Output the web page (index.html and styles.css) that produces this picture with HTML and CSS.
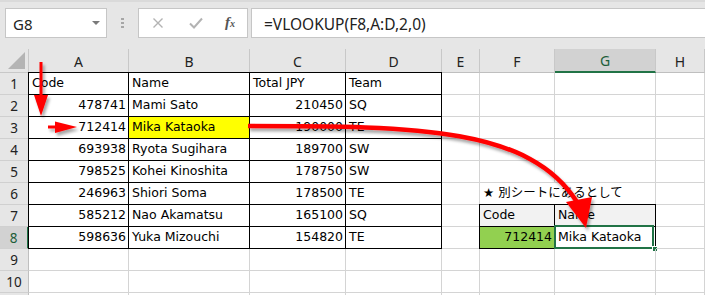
FILE: index.html
```html
<!DOCTYPE html>
<html lang="ja">
<head>
  <meta charset="UTF-8"/>
  <title>VLOOKUP sample</title>
  <link rel="stylesheet" href="styles.css">
</head>
<body>
  <!-- Formula bar -->
  <div class="toolbar">
    <div class="namebox"><span>G8</span><i class="drop"></i></div>
    <div class="dots"><i></i><i></i><i></i></div>
    <div class="fnbox">
      <svg class="ico" width="12" height="12" viewBox="0 0 12 12"><path d="M1.5 1.5 L10.5 10.5 M10.5 1.5 L1.5 10.5" stroke="#b3b3b3" stroke-width="1.4" fill="none"/></svg>
      <svg class="ico" width="14" height="12" viewBox="0 0 14 12"><path d="M1 6.5 L5 10.5 L13 1.5" stroke="#b3b3b3" stroke-width="2" fill="none"/></svg>
      <span class="fx">f<small>x</small></span>
    </div>
    <div class="formula">=VLOOKUP(F8,A:D,2,0)</div>
  </div>

  <!-- Sheet grid -->
  <div class="sheet">
    <div class="corner"><i></i></div>
    <div class="ch">A</div><div class="ch">B</div><div class="ch">C</div><div class="ch">D</div>
    <div class="ch">E</div><div class="ch">F</div><div class="ch sel">G</div><div class="ch">H</div>

    <div class="rh">1</div>
    <div class="c b bl bt">Code</div><div class="c b bt">Name</div><div class="c b bt">Total JPY</div><div class="c b bt">Team</div>
    <div class="c"></div><div class="c"></div><div class="c"></div><div class="c"></div>

    <div class="rh">2</div>
    <div class="c n b bl">478741</div><div class="c b">Mami Sato</div><div class="c n b">210450</div><div class="c b">SQ</div>
    <div class="c"></div><div class="c"></div><div class="c"></div><div class="c"></div>

    <div class="rh">3</div>
    <div class="c n b bl">712414</div><div class="c b yel">Mika Kataoka</div><div class="c n b">190000</div><div class="c b">TE</div>
    <div class="c"></div><div class="c"></div><div class="c"></div><div class="c"></div>

    <div class="rh">4</div>
    <div class="c n b bl">693938</div><div class="c b">Ryota Sugihara</div><div class="c n b">189700</div><div class="c b">SW</div>
    <div class="c"></div><div class="c"></div><div class="c"></div><div class="c"></div>

    <div class="rh">5</div>
    <div class="c n b bl">798525</div><div class="c b">Kohei Kinoshita</div><div class="c n b">178750</div><div class="c b">SW</div>
    <div class="c"></div><div class="c"></div><div class="c"></div><div class="c"></div>

    <div class="rh">6</div>
    <div class="c n b bl">246963</div><div class="c b">Shiori Soma</div><div class="c n b">178500</div><div class="c b">TE</div>
    <div class="c"></div><div class="c over">★ 別シートにあるとして</div><div class="c"></div><div class="c"></div>

    <div class="rh">7</div>
    <div class="c n b bl">585212</div><div class="c b">Nao Akamatsu</div><div class="c n b">165100</div><div class="c b">SQ</div>
    <div class="c"></div><div class="c b bl bt hd">Code</div><div class="c b bt hd">Name</div><div class="c"></div>

    <div class="rh sel">8</div>
    <div class="c n b bl">598636</div><div class="c b">Yuka Mizouchi</div><div class="c n b">154820</div><div class="c b">TE</div>
    <div class="c"></div><div class="c n b bl grn">712414</div>
    <div class="c b active">Mika Kataoka<i class="frame"></i><i class="handle"></i></div>
    <div class="c"></div>

    <div class="rh">9</div>
    <div class="c"></div><div class="c"></div><div class="c"></div><div class="c"></div>
    <div class="c"></div><div class="c"></div><div class="c"></div><div class="c"></div>

    <div class="rh">10</div>
    <div class="c"></div><div class="c"></div><div class="c"></div><div class="c"></div>
    <div class="c"></div><div class="c"></div><div class="c"></div><div class="c"></div>

    <!-- row 11 only shows its top edge -->
    <div class="rh"></div>
    <div class="c"></div><div class="c"></div><div class="c"></div><div class="c"></div>
    <div class="c"></div><div class="c"></div><div class="c"></div><div class="c"></div>
  </div>

  <!-- Red annotation arrows drawn over the sheet -->
  <svg class="arrows" width="705" height="295" viewBox="0 0 705 295">
    <defs>
      <filter id="shadow" x="-20%" y="-20%" width="140%" height="140%">
        <feDropShadow dx="2" dy="3" stdDeviation="1.6" flood-color="#000" flood-opacity="0.35"/>
      </filter>
    </defs>
    <g fill="#ff0000" stroke="#ff0000" filter="url(#shadow)">
      <line x1="41" y1="62" x2="41" y2="97" stroke-width="3"/>
      <polygon points="34,95 48,95 41,116" stroke="none"/>
      <line x1="48" y1="127" x2="57" y2="127" stroke-width="3"/>
      <polygon points="55,121.5 55,133 77,127" stroke="none"/>
      <path d="M248 126 C 420 126, 530 128, 577 202" fill="none" stroke-width="4.5"/>
      <polygon points="566,202 592,197 586,228" stroke="none"/>
    </g>
  </svg>
</body>
</html>
```

FILE: styles.css
```css
/* BASE */
* { box-sizing: border-box; margin: 0; padding: 0; }
body { position: relative; width: 705px; height: 295px; overflow: hidden; background: #fff; font-family: "DejaVu Sans", "Noto Sans CJK JP", sans-serif; }

/* FORMULA BAR */
.toolbar { height: 49px; background: #e6e6e6; border-top: 2px solid #dadada; display: flex; align-items: flex-start; padding: 6px 0 0 5px; font-family: "Noto Sans", sans-serif; }
.namebox { width: 102px; height: 30px; background: #fff; border: 1px solid #c6c6c6; display: flex; align-items: center; justify-content: space-between; padding: 2px 6px 0 7px; font-size: 15px; color: #222; }
.drop { width: 0; height: 0; border-left: 4px solid transparent; border-right: 4px solid transparent; border-top: 4px solid #7a7a7a; margin-top: -2px; }
.dots { display: flex; flex-direction: column; gap: 2px; margin: 10px 14px 0 14px; }
.dots i { width: 3px; height: 2px; background: #a6a6a6; }
.fnbox { width: 110px; height: 30px; background: #fff; border: 1px solid #c6c6c6; display: flex; align-items: center; padding-left: 13px; }
.fnbox .ico:first-child { margin-right: 25px; }
.fnbox .ico { margin-right: 22px; }
.fx { font-family: "Liberation Serif", serif; font-style: italic; font-weight: bold; font-size: 15px; color: #555; margin-top: -2px; }
.fx small { font-size: 10px; }
.formula { flex: 1; height: 30px; margin: 0 -2px 0 3px; background: #fff; border: 1px solid #c6c6c6; display: flex; align-items: center; padding: 1px 0 0 12px; font-size: 15.5px; color: #222; }

/* SHEET GRID */
.sheet { display: grid; grid-template-columns: 29px 100px 121px 96px 96px 38px 75px 101px 1fr; grid-template-rows: 24px repeat(11, 22px); }
.corner, .ch, .rh { background: #e6e6e6; color: #222; font-family: "Noto Sans", sans-serif; }
.corner { border-right: 1px solid #c8c8c8; border-bottom: 1px solid #c8c8c8; display: flex; justify-content: flex-end; align-items: flex-end; padding: 0 3px 3px 0; }
.corner i { width: 17px; height: 17px; background: #b4b4b4; clip-path: polygon(100% 0, 100% 100%, 0 100%); }
.ch { border-right: 1px solid #c8c8c8; border-bottom: 1px solid #bfbfbf; display: flex; align-items: center; justify-content: center; font-size: 14px; padding-top: 1px; }
.ch.sel { background: #d2d2d2; border-bottom: 2px solid #217346; color: #1d5e39; }
.rh { border-right: 1px solid #bfbfbf; border-bottom: 1px solid #d0d0d0; display: flex; align-items: center; justify-content: center; font-size: 13.5px; }
.rh.sel { background: #d2d2d2; border-right: 2px solid #217346; color: #1d5e39; }

/* CELLS */
.c { position: relative; border-right: 1px solid #d4d4d4; border-bottom: 1px solid #d4d4d4; display: flex; align-items: flex-end; padding: 0 2px 4px 3px; font-size: 12.5px; line-height: 15px; white-space: nowrap; color: #000; }
.n { justify-content: flex-end; }
.b { border-color: #000; }
.bl { box-shadow: -1px 0 0 #000; }
.bt { box-shadow: 0 -1px 0 #000; }
.bl.bt { box-shadow: -1px 0 0 #000, 0 -1px 0 #000, -1px -1px 0 #000; }
.over { border-right-color: transparent; }
.yel { background: #ffff00; }
.grn { background: #92d050; }
.hd { background: #f2f2f2; }

/* ACTIVE CELL */
.frame { position: absolute; left: -1px; top: -2px; right: 1px; bottom: -1px; border: 2px solid #217346; }
.handle { position: absolute; right: -3px; bottom: -4px; width: 6px; height: 6px; background: #217346; border: 1px solid #fff; }

/* ARROWS OVERLAY */
.arrows { position: absolute; left: 0; top: 0; pointer-events: none; }
```
